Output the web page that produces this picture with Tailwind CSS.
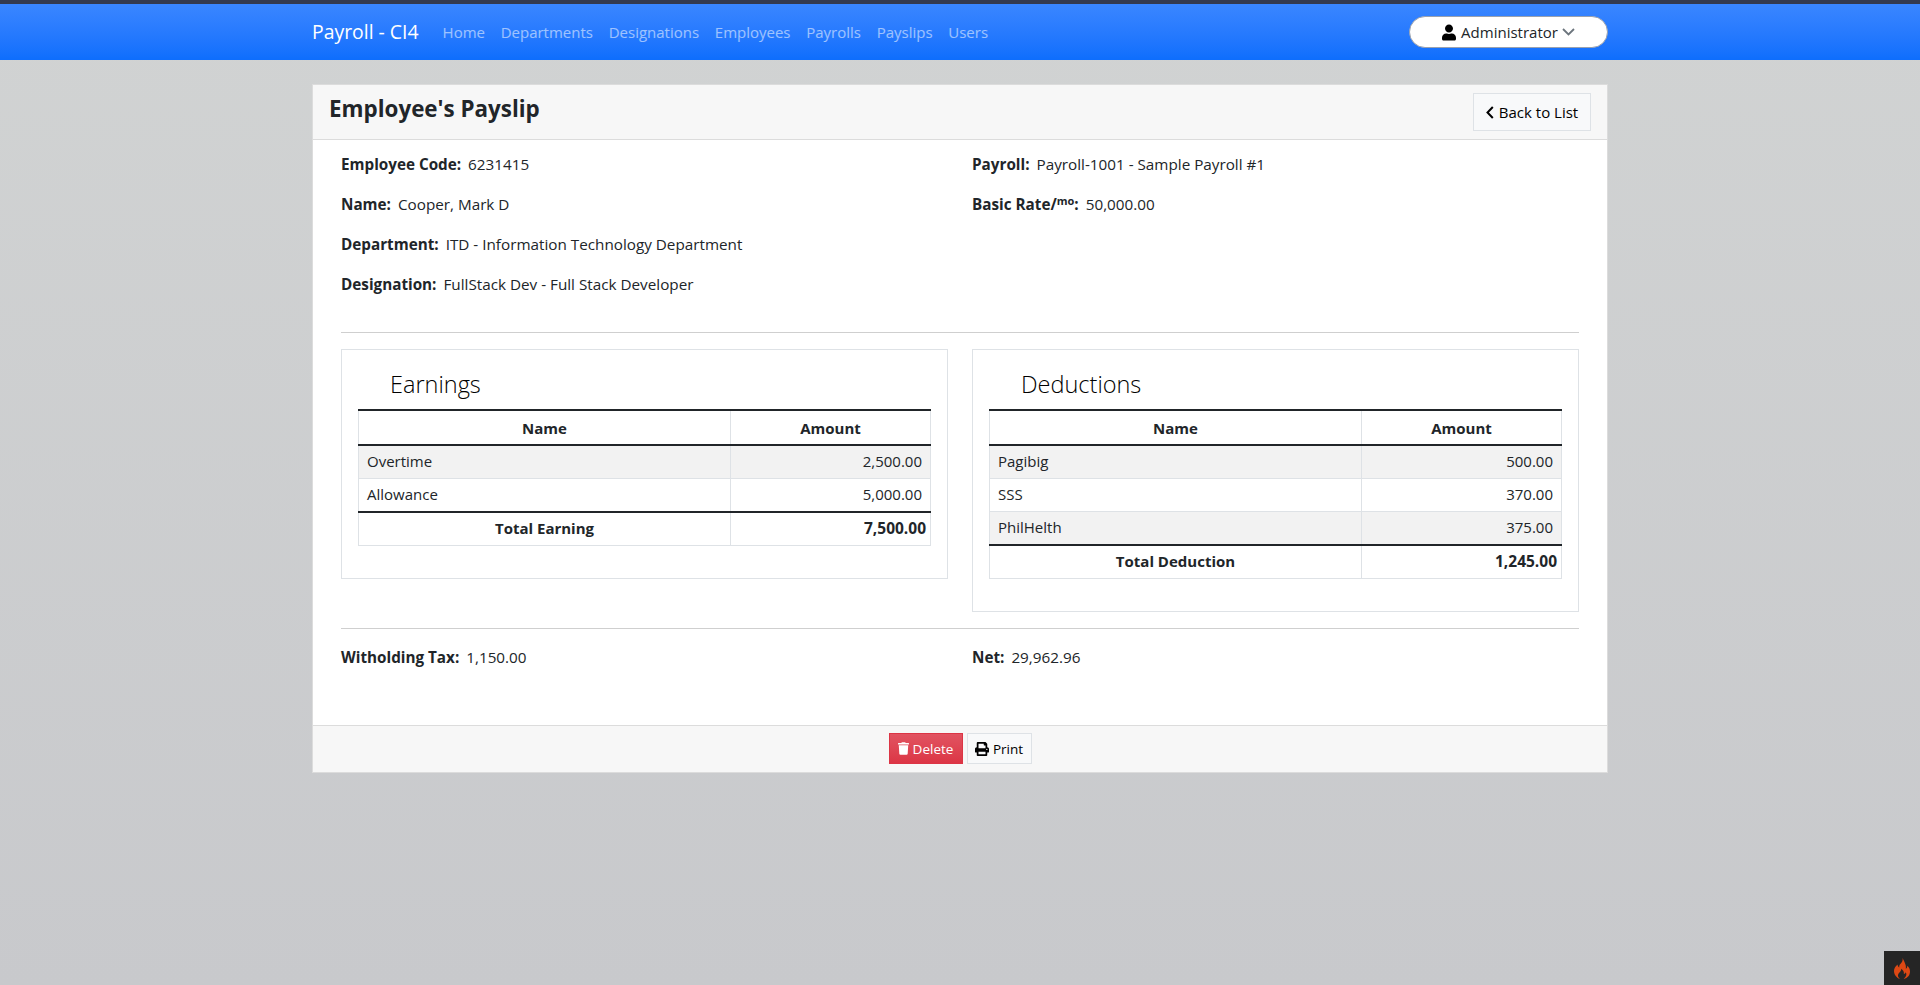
<!DOCTYPE html>
<html lang="en">

<head>
  <meta charset="UTF-8">
  <meta name="viewport" content="width=device-width, initial-scale=1.0">
  <title>Payroll - CI4</title>
  <script src="https://cdn.jsdelivr.net/npm/@tailwindcss/browser@4"></script>
</head>

<body class="min-h-screen bg-gradient-to-b from-[#d1d3d3] to-[#c8c9cc] font-['Open_Sans',sans-serif] text-[15px] leading-6 text-[#212529]">
  <!-- nav -->
  <div class="h-1 bg-[#343a4f]"></div>
  <nav class="h-14 bg-gradient-to-b from-[#3a86ff] to-[#0d6efd]">
    <div class="w-[1296px] mx-auto h-full flex items-center">
      <a class="text-[19.4px] text-white mr-[24px]">Payroll - CI4</a>
      <div class="flex gap-[15.7px] text-white/55">
        <a>Home</a>
        <a>Departments</a>
        <a>Designations</a>
        <a>Employees</a>
        <a>Payrolls</a>
        <a>Payslips</a>
        <a>Users</a>
      </div>
      <div class="ml-auto w-[199px] h-8 bg-white border border-gray-400 rounded-full flex items-center justify-center gap-[5px]">
        <svg class="w-[14px] h-[17px]" viewBox="0 0 448 512" fill="#000"><path d="M224 256c70.7 0 128-57.3 128-128S294.7 0 224 0 96 57.3 96 128s57.3 128 128 128zm89.6 32h-16.7c-22.2 10.2-46.9 16-72.9 16s-50.6-5.8-72.9-16h-16.7C60.2 288 0 348.2 0 422.4V464c0 26.5 21.5 48 48 48h352c26.5 0 48-21.5 48-48v-41.6c0-74.2-60.2-134.4-134.4-134.4z"/></svg>
        <span class="mr-[-1px]">Administrator</span>
        <svg class="w-[13px] h-[8px]" viewBox="0 0 13 8" fill="none" stroke="#6c757d" stroke-width="1.8"><path d="M1 1l5.5 5.500L12 1"/></svg>
      </div>
    </div>
  </nav>

  <!-- card -->
  <div class="w-[1296px] mx-auto mt-6 bg-white border border-[#dcdcdc]">
    <div class="h-[55px] bg-[#f7f7f7] border-b border-[#dcdcdc] flex justify-between pl-4 pr-4">
      <h1 class="text-[22.4px] leading-[30px] mt-[9px] font-bold">Employee's Payslip</h1>
      <a class="h-[38px] w-[118px] mt-2 bg-[#f8f9fa] border border-[#dee2e6] flex items-center justify-center gap-[5px] text-black">
        <svg class="w-[8px] h-[13px]" viewBox="0 0 8 13" fill="none" stroke="#000" stroke-width="2"><path d="M6.800 1L1.500 6.500l5.300 5.500"/></svg>
        Back to List
      </a>
    </div>

    <div class="px-7 pt-3 pb-14">
      <div class="grid grid-cols-2 gap-x-6 text-[15.25px]">
        <div class="flex flex-col gap-4">
          <div><b class="mr-[7px]">Employee Code:</b>6231415</div>
          <div><b class="mr-[7px]">Name:</b>Cooper, Mark D</div>
          <div><b class="mr-[7px]">Department:</b>ITD - Information Technology Department</div>
          <div><b class="mr-[7px]">Designation:</b>FullStack Dev - Full Stack Developer</div>
        </div>
        <div class="flex flex-col gap-4">
          <div><b class="mr-[7px]">Payroll:</b>Payroll-1001 - Sample Payroll #1</div>
          <div><b class="mr-[7px]">Basic Rate/<sup class="text-[11px]">mo</sup>:</b>50,000.00</div>
        </div>
      </div>

      <hr class="mt-9 mb-4 border-[#cfcfcf]">

      <div class="grid grid-cols-2 gap-x-6 items-start">
        <div class="border border-[#dee2e6] p-4">
          <h4 class="pl-8 h-[43px] pt-1 text-[23.5px] leading-[29px] font-light text-black">Earnings</h4>
          <table class="w-[573px] table-fixed border-collapse mb-4">
            <thead>
              <tr class="h-[35px] border-t-2 border-b-2 border-[#212529] font-bold">
                <th class="w-[372px] border-x border-[#dee2e6] text-center">Name</th>
                <th class="border-x border-[#dee2e6] text-center">Amount</th>
              </tr>
            </thead>
            <tbody>
              <tr class="h-[33px] bg-[#f2f2f2]">
                <td class="border border-t-0 border-[#dee2e6] px-2 pb-[2px]">Overtime</td>
                <td class="border border-t-0 border-[#dee2e6] px-2 pb-[2px] text-right">2,500.00</td>
              </tr>
              <tr class="h-[34px]">
                <td class="border-x border-[#dee2e6] px-2 pb-px">Allowance</td>
                <td class="border-x border-[#dee2e6] px-2 pb-px text-right">5,000.00</td>
              </tr>
              <tr class="h-[33px] border-t-2 border-[#212529] font-bold">
                <td class="border border-t-0 border-[#dee2e6] px-1 pb-px text-center">Total Earning</td>
                <td class="border border-t-0 border-[#dee2e6] px-1 pb-px text-right text-[15.5px]">7,500.00</td>
              </tr>
            </tbody>
          </table>
        </div>

        <div class="border border-[#dee2e6] p-4">
          <h4 class="pl-8 h-[43px] pt-1 text-[23.5px] leading-[29px] font-light text-black">Deductions</h4>
          <table class="w-[573px] table-fixed border-collapse mb-4">
            <thead>
              <tr class="h-[35px] border-t-2 border-b-2 border-[#212529] font-bold">
                <th class="w-[372px] border-x border-[#dee2e6] text-center">Name</th>
                <th class="border-x border-[#dee2e6] text-center">Amount</th>
              </tr>
            </thead>
            <tbody>
              <tr class="h-[33px] bg-[#f2f2f2]">
                <td class="border border-t-0 border-[#dee2e6] px-2 pb-[2px]">Pagibig</td>
                <td class="border border-t-0 border-[#dee2e6] px-2 pb-[2px] text-right">500.00</td>
              </tr>
              <tr class="h-[33px]">
                <td class="border border-t-0 border-[#dee2e6] px-2 pb-px">SSS</td>
                <td class="border border-t-0 border-[#dee2e6] px-2 pb-px text-right">370.00</td>
              </tr>
              <tr class="h-[34px] bg-[#f2f2f2]">
                <td class="border-x border-[#dee2e6] px-2 pb-px">PhilHelth</td>
                <td class="border-x border-[#dee2e6] px-2 pb-px text-right">375.00</td>
              </tr>
              <tr class="h-[33px] border-t-2 border-[#212529] font-bold">
                <td class="border border-t-0 border-[#dee2e6] px-1 pb-px text-center">Total Deduction</td>
                <td class="border border-t-0 border-[#dee2e6] px-1 pb-px text-right text-[15.5px]">1,245.00</td>
              </tr>
            </tbody>
          </table>
        </div>
      </div>

      <hr class="my-4 border-[#cfcfcf]">

      <div class="grid grid-cols-2 gap-x-6 text-[15.25px]">
        <div><b class="mr-[7px]">Witholding Tax:</b>1,150.00</div>
        <div><b class="mr-[7px]">Net:</b>29,962.96</div>
      </div>
    </div>

    <div class="h-[47px] bg-[#f7f7f7] border-t border-[#dcdcdc] flex items-center justify-center gap-1 text-[13.5px]">
      <a class="h-[31px] w-[74px] bg-gradient-to-b from-[#e15361] to-[#dc3545] border border-[#dc3545] text-white flex items-center justify-center gap-1">
        <svg class="w-[11px] h-[13px]" viewBox="0 0 448 512" fill="#fff"><path d="M432 32H312l-9.400-18.700A24 24 0 0 0 281.100 0H166.800a23.720 23.720 0 0 0-21.400 13.300L136 32H16A16 16 0 0 0 0 48v32a16 16 0 0 0 16 16h416a16 16 0 0 0 16-16V48a16 16 0 0 0-16-16zM53.200 467a48 48 0 0 0 47.900 45h245.800a48 48 0 0 0 47.900-45L416 128H32z"/></svg>
        Delete
      </a>
      <a class="h-[31px] w-[65px] bg-[#f8f9fa] border border-[#dee2e6] text-black flex items-center justify-center gap-[4px]">
        <svg class="w-[14px] h-[14px]" viewBox="0 0 512 512" fill="#000"><path d="M448 192V77.250c0-8.490-3.370-16.620-9.370-22.630L393.370 9.370c-6-6-14.140-9.370-22.630-9.370H96C78.330 0 64 14.330 64 32v160c-35.350 0-64 28.650-64 64v112c0 8.840 7.160 16 16 16h48v96c0 17.670 14.330 32 32 32h320c17.670 0 32-14.330 32-32v-96h48c8.840 0 16-7.160 16-16V256c0-35.350-28.650-64-64-64zm-64 256H128v-96h256v96zm0-224H128V64h192v48c0 8.840 7.160 16 16 16h48v96zm48 72c-13.250 0-24-10.750-24-24 0-13.260 10.750-24 24-24s24 10.740 24 24c0 13.250-10.750 24-24 24z"/></svg>
        Print
      </a>
    </div>
  </div>

  <!-- debug toolbar button -->
  <div class="fixed right-0 bottom-0 w-9 h-[34px] bg-[#252525] flex items-center justify-center">
    <svg class="w-4 h-[21px]" viewBox="0 0 16 21" fill="#dd4814"><path d="M8.500 0c.6 2.600-.4 4.200-1.900 5.800C5.500 7 5 8 5.300 9.400 4.300 9 3.600 8 3.600 6.600 1.300 8.600 0 10.600 0 13c0 3.600 2.300 6.700 6 8-1.500-1.200-2.300-2.600-2-4 .3-1.500 1.500-2.300 2.500-3.700.6-.9.800-1.700.7-2.600 2.200 1.500 3.100 3.400 2.600 5.300 1 0 1.600-.6 1.900-1.700 .7 1 .9 2.300 .3 3.600-.5 1.100-1.300 1.900-2.500 3.100C14 20 16 17 16 13.500c0-2.200-1-4.200-2.700-5.700 0 1.500-.5 2.500-1.500 3 .4-2.400-.2-4.300-1-6.100C10.200 3.300 9.500 1.500 8.500 0z"/></svg>
  </div>
</body>

</html>
